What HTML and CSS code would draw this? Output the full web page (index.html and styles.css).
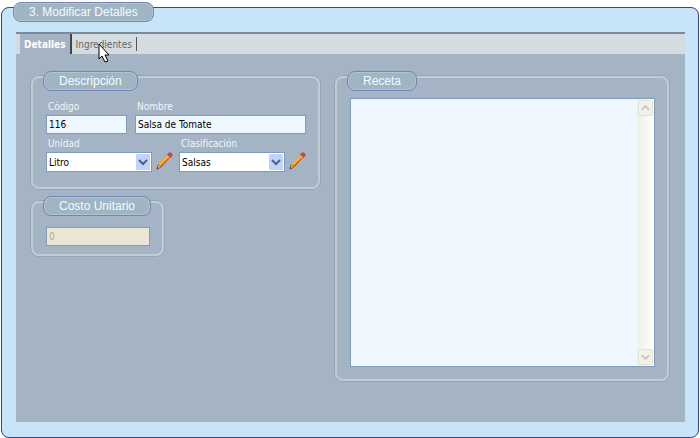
FILE: index.html
```html
<!DOCTYPE html>
<html lang="es">
<head>
	<meta charset="utf-8">
	<title>Modificar Detalles</title>
	<link rel="stylesheet" href="styles.css">
</head>
<body>
	<form>
		<fieldset class="window">
			<legend class="title">3. Modificar Detalles</legend>
			<div class="panel">
				<nav class="tabs">
					<a class="tab active" href="#detalles">Detalles</a>
					<a class="tab" href="#ingredientes">Ingredientes</a>
				</nav>
				<div class="columns" id="detalles">
					<div class="left">
						<fieldset class="group">
							<legend class="title">Descripción</legend>
							<div class="body">
								<div class="row">
									<div class="field codigo">
										<label for="codigo">Código</label>
										<input type="text" id="codigo" value="116">
									</div>
									<div class="field grow">
										<label for="nombre">Nombre</label>
										<input type="text" id="nombre" value="Salsa de Tomate">
									</div>
								</div>
								<div class="row picks">
									<div class="field grow">
										<label for="unidad">Unidad</label>
										<div class="pick">
											<div class="combo">
												<select id="unidad"><option>Litro</option></select>
												<svg class="arrow" viewBox="0 0 14 16"><path d="M3 6l4 4 4-4"/></svg>
											</div>
											<button type="button" class="edit" aria-label="Editar unidad">
												<svg viewBox="0 0 17 18"><use href="#pencil"/></svg>
											</button>
										</div>
									</div>
									<div class="field grow">
										<label for="clasificacion">Clasificación</label>
										<div class="pick">
											<div class="combo">
												<select id="clasificacion"><option>Salsas</option></select>
												<svg class="arrow" viewBox="0 0 14 16"><path d="M3 6l4 4 4-4"/></svg>
											</div>
											<button type="button" class="edit" aria-label="Editar clasificación">
												<svg viewBox="0 0 17 18"><use href="#pencil"/></svg>
											</button>
										</div>
									</div>
								</div>
							</div>
						</fieldset>
						<fieldset class="group costo">
							<legend class="title">Costo Unitario</legend>
							<div class="body">
								<input type="text" value="0" aria-label="Costo Unitario" disabled>
							</div>
						</fieldset>
					</div>
					<fieldset class="group">
						<legend class="title">Receta</legend>
						<div class="body">
							<div class="memo">
								<textarea aria-label="Receta"></textarea>
								<div class="scroll">
									<button type="button" aria-label="Subir"><svg viewBox="0 0 14 14"><path d="M3 9l4-4 4 4"/></svg></button>
									<button type="button" aria-label="Bajar"><svg viewBox="0 0 14 14"><path d="M3 5l4 4 4-4"/></svg></button>
								</div>
							</div>
						</div>
					</fieldset>
				</div>
			</div>
		</fieldset>
	</form>
	<svg class="cursor" viewBox="0 0 12 20"><path d="M1 1v15l3-3 3 6 3-1-3-6h4z"/></svg>
	<svg width="0" height="0" class="defs">
		<symbol id="pencil" viewBox="0 0 17 18">
			<path d="M1 17l1-4L12 3l2 2L5 15z" fill="#f39a1d" stroke="#a8502a" stroke-width="1"/>
			<path d="M3 13l9-9" stroke="#ffb52c" stroke-width="2"/>
			<path d="M5 14l9-9" stroke="#cf5716" stroke-width="1"/>
			<path d="M11 3l2-2h2l1 1v2l-2 2z" fill="#d4493a" stroke="#a5523f" stroke-width="1"/>
			<path d="M11 3l3 3" stroke="#b9aeb4" stroke-width="1"/>
			<path d="M1 17l1-4 3 2z" fill="#ecc9a0" stroke="#8b5a48" stroke-width=".7"/>
			<path d="M1 17v-2l2 1z" fill="#443c48"/>
		</symbol>
	</svg>
</body>
</html>
```
FILE: styles.css
```css
* {
	box-sizing: border-box;
}
body {
	margin: 0;
	padding: 7px 1px 1px 1px;
	background-color: #FFF;
	font: 10px "DejaVu Sans Condensed", "DejaVu Sans", sans-serif;
	color: #000;
}
fieldset {
	display: flow-root;
	min-width: 0;
	margin: 0;
	padding: 0;
}
.window {
	border: 1px solid #34488a;
	border-radius: 8px;
	background-color: #c8e4f8;
	padding: 0 13px 15px 14px;
}
/* floated so that the caption can sit below the middle of the border */
.title {
	float: left;
	height: 20px;
	margin-top: -6px;
	padding: 0 15px;
	border: 1px solid #7583b5;
	border-radius: 8px;
	box-shadow: inset 0 0 0 1px #afc5d0;
	background-color: #9fb5c3;
	color: #f4fbff;
	font: 12px/18px "Liberation Sans", Arial, sans-serif;
	white-space: nowrap;
}
.window > .title {
	margin-left: -3px;
}
.panel {
	clear: both;
	margin-top: 24px;
	padding-bottom: 41px;
	border-top: 2px solid #7b8a9a;
	background-color: #a5b4c4;
}
.tabs {
	display: flex;
	height: 20px;
	padding-left: 4px;
	background-color: #d5dcdf;
}
.tab {
	height: 14px;
	margin-top: 3px;
	padding: 0 4px;
	border-right: 1px solid #555;
	color: #666;
	line-height: 15px;
	text-decoration: none;
}
.tab.active {
	height: 20px;
	margin-top: 0;
	border-right: 2px solid #444;
	background-color: #a5b4c4;
	color: #FFF;
	font-weight: bold;
	line-height: 21px;
}
.columns {
	display: grid;
	grid-template-columns: 289fr 334fr;
	gap: 15px;
	padding: 22px 16px 0 15px;
}
.left {
	display: flex;
	flex-direction: column;
	gap: 12px;
	min-width: 0;
}
.group {
	border: 2px solid #bdcdd5;
	border-radius: 8px;
	box-shadow: 0 0 0 1px #93a5b4;
	padding: 0 12px 12px 13px;
}
.group > .title {
	margin-left: -3px;
	margin-top: -7px;
}
.body {
	clear: both;
	display: flex;
	flex-direction: column;
	gap: 2px;
	padding-top: 7px;
}
.left .body {
	padding-top: 8px;
	padding-bottom: 3px;
}
.row {
	display: flex;
	gap: 8px;
}
.picks {
	gap: 6px;
}
.field {
	min-width: 0;
}
.codigo {
	width: 81px;
}
.grow {
	flex: 1;
}
label {
	display: block;
	height: 16px;
	padding-left: 2px;
	color: #eef7fb;
	line-height: 16px;
}
input {
	display: block;
	width: 100%;
	height: 19px;
	margin: 0;
	padding: 0 2px;
	border: 1px solid #7f9db9;
	border-radius: 0;
	background-color: #f0f8ff;
	font: inherit;
	color: #000;
}
input:disabled {
	background-color: #ebe6d6;
	color: #aca899;
}
.pick {
	display: flex;
	gap: 4px;
}
.combo {
	position: relative;
	flex: 1;
}
select {
	appearance: none;
	display: block;
	width: 100%;
	height: 20px;
	padding: 0 18px 0 2px;
	border: 1px solid #7f9db9;
	border-radius: 0;
	background-color: #FFF;
	font: inherit;
	color: #000;
}
.arrow {
	position: absolute;
	top: 2px;
	right: 2px;
	width: 14px;
	height: 16px;
	border-radius: 1px;
	background-color: #c2d3fb;
	fill: none;
	stroke: #4d6185;
	stroke-width: 2;
	pointer-events: none;
}
.edit {
	width: 17px;
	height: 18px;
	padding: 0;
	border: 0;
	background: none;
}
.edit svg {
	display: block;
	width: 17px;
	height: 18px;
}
.costo {
	width: 46%;
	padding-bottom: 8px;
}
.costo .body {
	padding-top: 11px;
	padding-bottom: 0;
}
.memo {
	display: flex;
	height: 269px;
	border: 1px solid #7f9db9;
	background-color: #f0f8ff;
}
textarea {
	flex: 1;
	min-width: 0;
	padding: 2px;
	border: 0;
	resize: none;
	background: none;
	font: inherit;
}
.scroll {
	display: flex;
	flex-direction: column;
	justify-content: space-between;
	width: 17px;
	padding: 1px;
	background: linear-gradient(to right, #f0f0e8, #fefefb);
}
.scroll button {
	width: 15px;
	height: 16px;
	padding: 0;
	border: 1px solid #e3e2d7;
	border-radius: 2px;
	background-color: #f3f2ea;
}
.scroll svg {
	display: block;
	width: 13px;
	height: 14px;
	fill: none;
	stroke: #c8c6ba;
	stroke-width: 2;
}
.cursor {
	position: absolute;
	top: 43px;
	left: 98px;
	width: 12px;
	height: 20px;
	fill: #FFF;
	stroke: #000;
	pointer-events: none;
}
.defs {
	position: absolute;
}
```
